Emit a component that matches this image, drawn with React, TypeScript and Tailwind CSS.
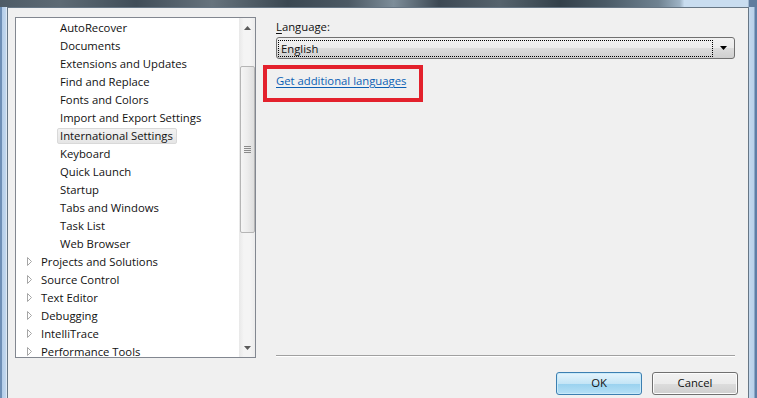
import React from "react";

const children = [
  "AutoRecover",
  "Documents",
  "Extensions and Updates",
  "Find and Replace",
  "Fonts and Colors",
  "Import and Export Settings",
  "International Settings",
  "Keyboard",
  "Quick Launch",
  "Startup",
  "Tabs and Windows",
  "Task List",
  "Web Browser",
];

const parents = [
  "Projects and Solutions",
  "Source Control",
  "Text Editor",
  "Debugging",
  "IntelliTrace",
  "Performance Tools",
];

function Tri() {
  return (
    <svg width="7" height="9" viewBox="0 0 7 9" className="shrink-0">
      <path d="M1.5 0.5 L5.5 4.5 L1.5 8.5 Z" fill="#ffffff" stroke="#a6a6a6" strokeWidth="1" />
    </svg>
  );
}

export default function App() {
  return (
    <div
      className="w-[757px] h-[398px] overflow-hidden flex flex-col bg-[#c5daef] text-[11.3px] text-[#111]"
      style={{ fontFamily: '"Open Sans", "Noto Sans", sans-serif' }}
    >
      <div className="h-[7px] shrink-0 bg-[linear-gradient(to_right,#4e5b66_0%,#5d6a74_8%,#404d58_18%,#66737d_28%,#3a4751_38%,#4c5964_46%,#7d8d99_52%,#3c4853_58%,#56636d_66%,#33404a_74%,#4a5a66_80%,#6f8291_87%,#9db2c4_89.8%,#c9ddf0_90.4%,#c9ddf0_98.8%,#5f7c9e_99%,#5f7c9e_100%)]" />
      <div className="flex flex-1 min-h-0">
        <div className="w-[7px] shrink-0 bg-[linear-gradient(to_right,#6e8fb6_0px,#6e8fb6_2px,#b3cce8_2px,#c3d8ee_6px,#dde8f4_6px,#dde8f4_7px)]" />
        <div className="w-[742px] shrink-0 bg-[#f0f0f0] border-l border-t border-r border-[#667685] flex flex-col">
          <div className="flex pt-[9px] pl-[7px]">
            {/* Tree */}
            <div className="w-[241px] h-[341px] border border-[#828790] bg-white flex overflow-hidden">
              <div className="flex-1 flex flex-col overflow-hidden">
                {children.map((c) => (
                  <div key={c} className="h-[18px] shrink-0 flex items-center pl-[41px] pt-[1px] leading-[16px]">
                    {c === "International Settings" ? (
                      <span className="h-[16px] px-[2px] border border-[#d9d9d9] rounded-[2px] bg-[linear-gradient(#f2f2f2,#e5e5e5)] leading-[14px] pr-[3px]">
                        {c}
                      </span>
                    ) : (
                      <span className="pl-[3px]">{c}</span>
                    )}
                  </div>
                ))}
                {parents.map((p) => (
                  <div key={p} className="h-[18px] shrink-0 flex items-center pl-[10px] pt-[1px] gap-[8px] leading-[16px]">
                    <Tri />
                    <span>{p}</span>
                  </div>
                ))}
              </div>
              {/* Scrollbar */}
              <div className="w-[16px] shrink-0 bg-[linear-gradient(to_right,#e8e8e8,#f4f4f4_30%,#f4f4f4_70%,#ececec)] flex flex-col items-center">
                <div className="h-[17px] shrink-0 flex items-center justify-center pt-[3px]">
                  <svg width="7" height="4" viewBox="0 0 7 4">
                    <path d="M0 4 L3.5 0 L7 4 Z" fill="#5a5a5a" />
                  </svg>
                </div>
                <div className="h-[31px] shrink-0" />
                <div className="w-[15px] h-[167px] shrink-0 ml-[1px] rounded-[2px] border border-[#b5b5b5] bg-[linear-gradient(to_right,#f5f5f5,#ececec_50%,#dedede)] flex flex-col items-center justify-center gap-[1px]">
                  <div className="w-[7px] h-[1px] bg-[#8a8a8a]" />
                  <div className="w-[7px] h-[1px] bg-[#8a8a8a]" />
                  <div className="w-[7px] h-[1px] bg-[#8a8a8a]" />
                  <div className="w-[7px] h-[1px] bg-[#8a8a8a]" />
                </div>
                <div className="flex-1" />
                <div className="h-[17px] shrink-0 flex items-center justify-center pb-[1px]">
                  <svg width="7" height="4" viewBox="0 0 7 4">
                    <path d="M0 0 L7 0 L3.5 4 Z" fill="#5a5a5a" />
                  </svg>
                </div>
              </div>
            </div>

            {/* Right panel */}
            <div className="ml-[20px] w-[459px] h-[341px] flex flex-col">
              <div className="mt-[2px] h-[16px] leading-[16px]">
                <span className="underline underline-offset-2">L</span>anguage:
              </div>
              <div className="mt-[2px] h-[22px] border border-[#707070] rounded-[3px] bg-[linear-gradient(#f2f2f2_0%,#ebebeb_50%,#dddddd_50%,#cfcfcf_100%)] flex items-center p-[1px]">
                <div className="flex-1 h-[17px] border border-dotted border-black flex items-center pl-[2px] pt-[1px] leading-[15px]">
                  English
                </div>
                <div className="w-[20px] flex items-center justify-center">
                  <svg width="7" height="4" viewBox="0 0 7 4">
                    <path d="M0 0 L7 0 L3.5 4 Z" fill="#000000" />
                  </svg>
                </div>
              </div>
              <div className="mt-[14px] h-[16px] leading-[16px] relative">
                <span className="text-[#0b5fb4] underline underline-offset-2">Get additional languages</span>
                <div className="absolute left-[-13px] top-[-8px] w-[160px] h-[37px] border-[4px] border-[#e3212c]" />
              </div>
              <div className="flex-1" />
              <div className="h-[2px] border-t border-[#a0a0a0] border-b border-b-white mb-[1px]" />
            </div>
          </div>

          {/* Buttons */}
          <div className="mt-[14px] flex justify-end gap-[10px] pr-[10px]">
            <div className="w-[86px] h-[23px] rounded-[3px] border border-[#3c7fb1] bg-[linear-gradient(#e5f4fc_0%,#c4e5f6_50%,#98d1ef_50%,#b6e0f5_100%)] shadow-[inset_0_0_0_1px_#c9eaf9] flex items-center justify-center">
              OK
            </div>
            <div className="w-[86px] h-[23px] rounded-[3px] border border-[#707070] bg-[linear-gradient(#f2f2f2_0%,#ebebeb_50%,#dddddd_50%,#cfcfcf_100%)] shadow-[inset_0_0_0_1px_#fcfcfc] flex items-center justify-center">
              Cancel
            </div>
          </div>
        </div>
        <div className="w-[8px] shrink-0 bg-[linear-gradient(to_right,#c3d8ee_0px,#b9d1ea_5px,#5f7ea6_6px,#5f7ea6_8px)]" />
      </div>
    </div>
  );
}
